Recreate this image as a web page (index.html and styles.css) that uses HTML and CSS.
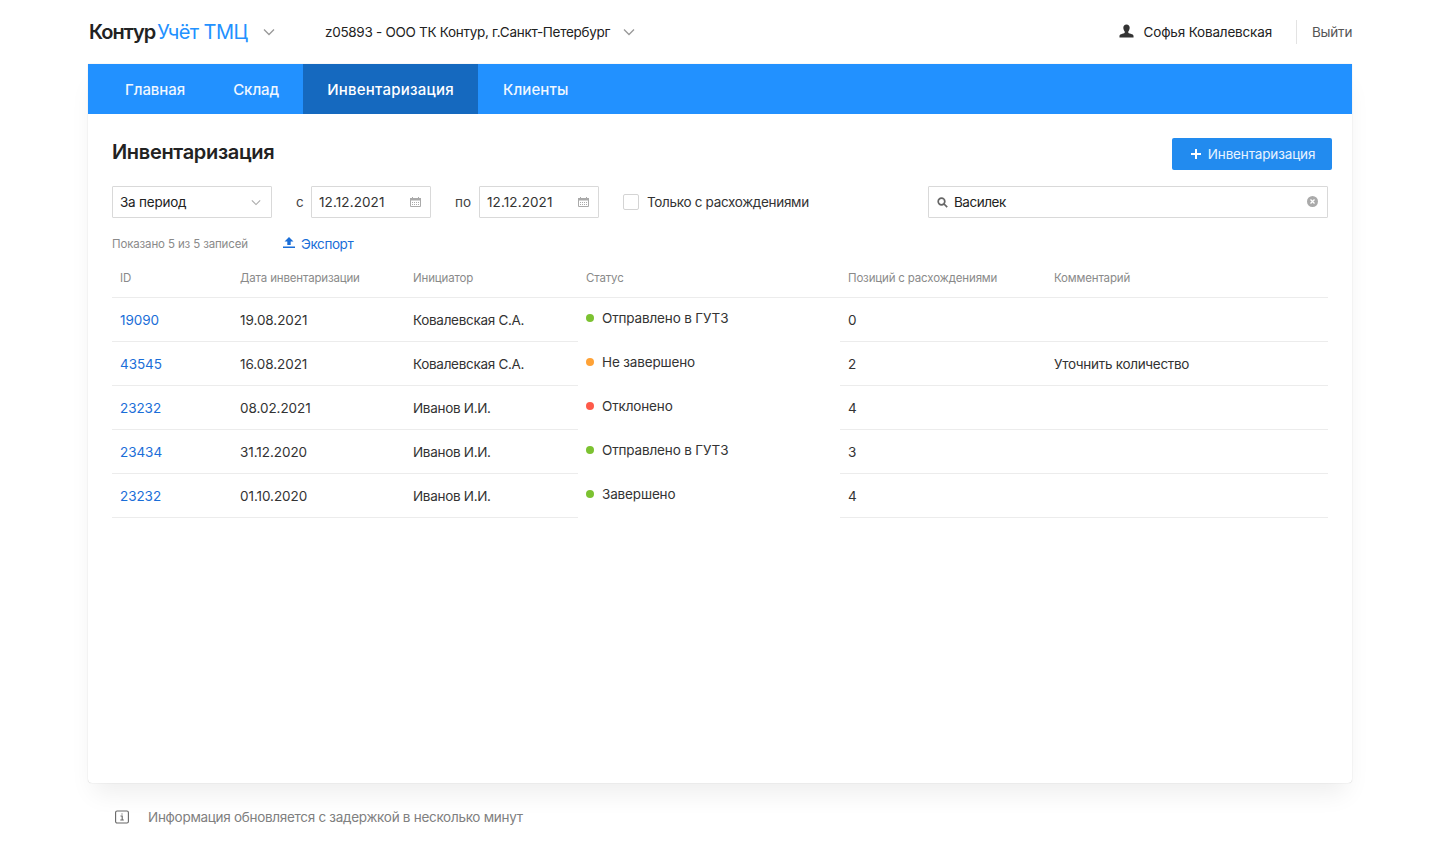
FILE: index.html
```html
<!DOCTYPE html>
<html lang="ru">
<head>
<meta charset="utf-8">
<title>Инвентаризация</title>
<link rel="stylesheet" href="styles.css">
</head>
<body>
<div class="page">
  <header class="topbar">
    <div class="brand"><span class="logo">Контур</span><span class="product">Учёт ТМЦ</span>
      <svg class="chev brand-chev" viewBox="0 0 12 8"><path d="M1 1.5l5 5 5-5"/></svg></div>
    <div class="org"><span>z05893 - ООО ТК Контур, г.Санкт-Петербург</span>
      <svg class="chev" viewBox="0 0 12 8"><path d="M1 1.5l5 5 5-5"/></svg></div>
    <div class="user">
      <svg class="user-icon" viewBox="0 0 16 14"><path d="M8 0c2.200 0 3.400 1.600 3.400 3.600 0 1.500-.7 3-1.500 3.800v1.100c0 .6 1 .9 2.600 1.500 1.700.6 3 1.100 3 2.200V14H.5v-1.800c0-1.100 1.300-1.600 3-2.200 1.600-.6 2.600-.9 2.600-1.500V7.400c-.8-.8-1.500-2.300-1.500-3.800C4.600 1.600 5.800 0 8 0z"/></svg>
      <span>Софья Ковалевская</span>
    </div>
    <a class="logout">Выйти</a>
  </header>

  <main class="card">
    <nav class="nav">
      <a class="nav-item">Главная</a>
      <a class="nav-item">Склад</a>
      <a class="nav-item active">Инвентаризация</a>
      <a class="nav-item">Клиенты</a>
    </nav>
    <div class="content">
      <div class="title-row">
        <h1>Инвентаризация</h1>
        <button class="primary"><svg viewBox="0 0 10 10"><path d="M5 0v10M0 5h10"/></svg>Инвентаризация</button>
      </div>
      <div class="filters">
        <div class="field select"><span>За период</span><svg class="chev small" viewBox="0 0 12 8"><path d="M1 1.500l5 5 5-5"/></svg></div>
        <span class="lbl lbl-from">с</span>
        <div class="field date"><span>12.12.2021</span>
          <svg class="cal" viewBox="0 0 11 10"><path class="cal-frame" d="M.5 1.500h10v8H.5z"/><path class="cal-top" d="M0 1h11v2.500H0zM2 0h1v1H2zM8 0h1v1H8z"/><path class="cal-dots" d="M2 5h1v1H2zM4 5h1v1H4zM6 5h1v1H6zM8 5h1v1H8zM2 7h1v1H2zM4 7h1v1H4zM6 7h1v1H6zM8 7h1v1H8z"/></svg></div>
        <span class="lbl lbl-to">по</span>
        <div class="field date"><span>12.12.2021</span>
          <svg class="cal" viewBox="0 0 11 10"><path class="cal-frame" d="M.5 1.500h10v8H.5z"/><path class="cal-top" d="M0 1h11v2.500H0zM2 0h1v1H2zM8 0h1v1H8z"/><path class="cal-dots" d="M2 5h1v1H2zM4 5h1v1H4zM6 5h1v1H6zM8 5h1v1H8zM2 7h1v1H2zM4 7h1v1H4zM6 7h1v1H6zM8 7h1v1H8z"/></svg></div>
        <label class="check"><span class="box"></span>Только с расхождениями</label>
        <div class="field search">
          <svg class="search-icon" viewBox="0 0 11 11"><circle cx="4.500" cy="4.500" r="3.300"/><path d="M7 7l3.200 3.200"/></svg>
          <span>Василек</span>
          <svg class="clear" viewBox="0 0 11 11"><circle cx="5.500" cy="5.500" r="5.500"/><path d="M3.500 3.500l4 4M7.500 3.500l-4 4"/></svg>
        </div>
      </div>
      <div class="meta">
        <span class="count">Показано 5 из 5 записей</span>
        <a class="export"><svg viewBox="0 0 12 11"><path d="M6 0l4.500 4.500H7.700V8H4.300V4.500H1.500zM0 9.500h12V11H0z"/></svg>Экспорт</a>
      </div>
      <table class="grid">
        <colgroup><col class="c1"><col class="c2"><col class="c3"><col class="c4"><col class="c5"><col class="c6"></colgroup>
        <thead><tr><th>ID</th><th>Дата инвентаризации</th><th>Инициатор</th><th>Статус</th><th>Позиций с расхождениями</th><th>Комментарий</th></tr></thead>
        <tbody>
          <tr><td class="num"><a class="id">19090</a></td><td class="num">19.08.2021</td><td>Ковалевская С.А.</td><td class="status"><i class="dot green"></i>Отправлено в ГУТЗ</td><td>0</td><td></td></tr>
          <tr><td class="num"><a class="id">43545</a></td><td class="num">16.08.2021</td><td>Ковалевская С.А.</td><td class="status"><i class="dot orange"></i>Не завершено</td><td>2</td><td>Уточнить количество</td></tr>
          <tr><td class="num"><a class="id">23232</a></td><td class="num">08.02.2021</td><td>Иванов И.И.</td><td class="status"><i class="dot red"></i>Отклонено</td><td>4</td><td></td></tr>
          <tr><td class="num"><a class="id">23434</a></td><td class="num">31.12.2020</td><td>Иванов И.И.</td><td class="status"><i class="dot green"></i>Отправлено в ГУТЗ</td><td>3</td><td></td></tr>
          <tr><td class="num"><a class="id">23232</a></td><td class="num">01.10.2020</td><td>Иванов И.И.</td><td class="status"><i class="dot green"></i>Завершено</td><td>4</td><td></td></tr>
        </tbody>
      </table>
    </div>
  </main>

  <footer class="note">
    <svg viewBox="0 0 14 14"><rect x=".6" y="1" width="12.800" height="12" rx="1.500"/><path d="M5.500 6h1.700v4M5.300 10h3.500M7 3.400v1.200"/></svg>
    <span>Информация обновляется с задержкой в несколько минут</span>
  </footer>
</div>
</body>
</html>
```
FILE: styles.css
```css
* { box-sizing: border-box; }
html, body { margin: 0; height: 100%; }
body {
  background: #fff;
  color: #222;
  font-family: Inter, "Noto Sans", sans-serif;
  font-size: 13.5px;
  overflow: hidden;
}
a { cursor: pointer; }
.page { width: 1264px; margin: 0 0 0 88px; }

.topbar { height: 64px; display: flex; align-items: center; }
.brand { display: flex; align-items: center; width: 237px; padding-left: 1px; }
.logo { font-size: 20px; font-weight: 600; letter-spacing: -1px; color: #222; }
.product { font-size: 20px; color: #2291ff; margin-left: 2px; letter-spacing: -.58px; }
.chev { width: 12px; height: 8px; fill: none; stroke: #999; stroke-width: 1.300; flex: none; }
.brand-chev { margin-left: 16px; }
.org { display: flex; align-items: center; flex: 1; }
.org .chev { margin-left: 13px; }
.org span { letter-spacing: -.29px; }
.user { display: flex; align-items: center; padding-right: 24px; }
.user span { margin-left: 10px; letter-spacing: -.17px; }
.user-icon { width: 15px; height: 14px; fill: #333; margin-top: -2px; }
.logout { border-left: 1px solid #e3e3e3; height: 24px; line-height: 24px; padding-left: 15px; color: #555; width: 56px; letter-spacing: -.22px; }

.card {
  height: 719px;
  background: #fff;
  border-radius: 0 0 4px 4px;
  box-shadow: 0 0 1px rgba(0,0,0,.28), 0 16px 24px -6px rgba(0,0,0,.07);
}
.nav { height: 50px; background: #2291ff; display: flex; padding-left: 13px; }
.nav-item { color: #fff; font-size: 15px; font-weight: 500; line-height: 52px; padding: 0 24px; letter-spacing: -.05px; opacity: .93; }
.nav-item.active { background: #1569bf; opacity: 1; letter-spacing: .24px; margin-right: 1px; }
.nav-item:last-child { letter-spacing: .1px; }

.content { padding: 24px 24px 0; }
.title-row { display: flex; justify-content: space-between; margin-right: -4px; height: 32px; align-items: flex-start; }
h1 { margin: 0; font-size: 20px; line-height: 29px; font-weight: 600; letter-spacing: -.33px; }
.primary {
  width: 160px; height: 32px; border: 0; border-radius: 2px; background: #228bef; color: #e8f3ff;
  font: inherit; font-size: 13.5px; letter-spacing: -.15px; display: flex; align-items: center; justify-content: center; gap: 7px; padding: 0 0 0 2px;
}
.primary svg { width: 10px; height: 10px; stroke: #fff; stroke-width: 2; fill: none; }

.filters { display: flex; align-items: center; margin-top: 16px; height: 32px; }
.field { height: 32px; border: 1px solid #d9d9d9; display: flex; align-items: center; padding: 0 7px; border-radius: 1px; }
.select { width: 160px; justify-content: space-between; letter-spacing: -.22px; }
.chev.small { width: 10px; height: 7px; stroke: #aaa; margin-right: 3px; }
.lbl { color: #444; }
.lbl-from { margin: 0 8px 0 24px; width: 7px; }
.lbl-to { margin: 0 8px 0 24px; width: 16px; }
.date { width: 120px; justify-content: space-between; letter-spacing: .1px; color: #333; }
.cal { width: 11px; height: 10px; margin-right: 2px; }
.cal-frame { fill: #fff; stroke: #aaa; }
.cal-top { fill: #aaa; }
.cal-dots { fill: #aaa; }
.check { display: flex; align-items: center; margin-left: 24px; width: 305px; color: #333; letter-spacing: -.32px; }
.box { width: 16px; height: 16px; border: 1px solid #d4d4d4; border-radius: 2px; margin-right: 8px; }
.search { width: 400px; letter-spacing: -.47px; }
.search span { flex: 1; margin-left: 7px; }
.search-icon { width: 11px; height: 11px; fill: none; stroke: #666; stroke-width: 1.700; margin-left: 1px; margin-right: -1px; }
.clear { width: 11px; height: 11px; margin-right: 2px; margin-top: -1px; }
.clear circle { fill: #aaa; }
.clear path { stroke: #fff; stroke-width: 1.300; fill: none; }

.meta { display: flex; align-items: center; margin-top: 16px; height: 20px; }
.count { font-size: 11.500px; color: #8a8a8a; letter-spacing: -.14px; width: 171px; }
.export { color: #1a6ed8; display: flex; align-items: center; gap: 6px; letter-spacing: -.4px; }
.export svg { width: 12px; height: 11px; fill: #1a6ed8; margin-top: -4px; }

.grid { width: 1216px; border-collapse: collapse; table-layout: fixed; margin-top: 3px; }
.c1 { width: 120px; } .c2, .c3 { width: 173px; } .c4 { width: 262px; } .c5 { width: 206px; } .c6 { width: 282px; }
th { font-size: 11.500px; font-weight: 400; color: #8a8a8a; text-align: left; height: 40px; padding: 2px 8px 0; border-bottom: 1px solid #ececec; letter-spacing: -.16px; }
td { height: 44px; padding: 2px 8px 0; border-bottom: 1px solid #ececec; letter-spacing: -.3px; color: #333; vertical-align: middle; }
td.num { letter-spacing: -.06px; }
td.status { border-bottom-color: transparent; padding-top: 0; padding-bottom: 3px; letter-spacing: -.15px; }
.id { color: #1a6ed8; }
.dot { display: inline-block; width: 8px; height: 8px; border-radius: 50%; margin-right: 8px; vertical-align: 1px; }
.green { background: #7cc231; } .orange { background: #ffa236; } .red { background: #fe5a4a; }

.note { display: flex; align-items: center; margin: 24px 0 0 27px; color: #808080; height: 20px; letter-spacing: -.29px; }
.note svg { width: 14px; height: 14px; fill: none; stroke: #666; stroke-width: 1.100; margin-right: 19px; }
```
